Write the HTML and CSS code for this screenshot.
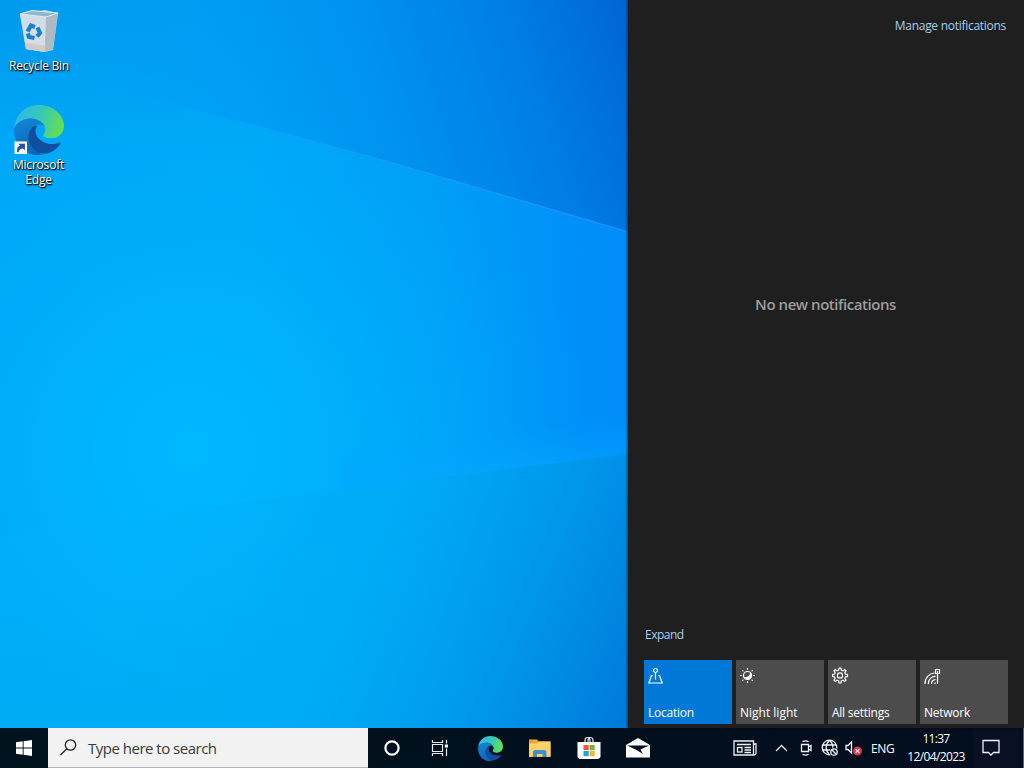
FILE: index.html
```html
<!DOCTYPE html>
<html lang="en">
<head>
    <meta charset="UTF-8">
    <meta name="viewport" content="width=device-width, initial-scale=1.0">
    <title>Desktop</title>
    <link rel="stylesheet" href="styles.css">
</head>
<body>

    <div class="main">
        <!-- Desktop -->
        <div class="desktop">
            <svg class="wallpaper" viewBox="0 0 628 728" preserveAspectRatio="none">
                <defs>
                    <linearGradient id="base" x1="0" y1="0" x2="1" y2="0">
                        <stop offset="0" stop-color="#00a6f7"/>
                        <stop offset="0.4" stop-color="#00a8f8"/>
                        <stop offset="0.7" stop-color="#009df5"/>
                        <stop offset="1" stop-color="#008bfa"/>
                    </linearGradient>
                    <radialGradient id="glow" gradientUnits="userSpaceOnUse" cx="190" cy="450" r="400">
                        <stop offset="0" stop-color="#00b9ff"/>
                        <stop offset="0.4" stop-color="#00b4ff" stop-opacity="0.7"/>
                        <stop offset="1" stop-color="#00acfc" stop-opacity="0"/>
                    </radialGradient>
                    <linearGradient id="upper" gradientUnits="userSpaceOnUse" x1="60" y1="170" x2="640" y2="-10">
                        <stop offset="0" stop-color="#00a2f6" stop-opacity="0"/>
                        <stop offset="0.3" stop-color="#009df5" stop-opacity="0.7"/>
                        <stop offset="0.55" stop-color="#0092ee"/>
                        <stop offset="0.78" stop-color="#007ee6"/>
                        <stop offset="1" stop-color="#0062d2"/>
                    </linearGradient>
                    <linearGradient id="topShade" x1="0" y1="0" x2="0" y2="1">
                        <stop offset="0" stop-color="#0092e8" stop-opacity="0.6"/>
                        <stop offset="1" stop-color="#0092e8" stop-opacity="0"/>
                    </linearGradient>
                    <linearGradient id="lower" gradientUnits="userSpaceOnUse" x1="150" y1="480" x2="640" y2="690">
                        <stop offset="0" stop-color="#00b2f8" stop-opacity="0.2"/>
                        <stop offset="0.45" stop-color="#00abf5" stop-opacity="0.8"/>
                        <stop offset="0.75" stop-color="#0096ea"/>
                        <stop offset="1" stop-color="#007adb"/>
                    </linearGradient>
                    <linearGradient id="floor" x1="0" y1="0" x2="0" y2="1">
                        <stop offset="0" stop-color="#00b4fa" stop-opacity="0"/>
                        <stop offset="1" stop-color="#00acf2" stop-opacity="0.8"/>
                    </linearGradient>
                    <linearGradient id="ray" x1="0" y1="0" x2="1" y2="0">
                        <stop offset="0" stop-color="#28a8ff" stop-opacity="0"/>
                        <stop offset="0.5" stop-color="#28a4ff" stop-opacity="0.6"/>
                        <stop offset="1" stop-color="#1e98ff" stop-opacity="0.8"/>
                    </linearGradient>
                    <linearGradient id="beam" gradientUnits="userSpaceOnUse" x1="500" y1="428" x2="505" y2="471">
                        <stop offset="0" stop-color="#00a4ff" stop-opacity="0"/>
                        <stop offset="1" stop-color="#08a8ff" stop-opacity="0.5"/>
                    </linearGradient>
                </defs>
                <rect width="628" height="728" fill="url(#base)"/>
                <rect width="628" height="728" fill="url(#glow)"/>
                <rect width="628" height="150" fill="url(#topShade)"/>
                <path d="M0 0H628V232L400 165L250 124L100 84L0 60Z" fill="url(#upper)"/>
                <rect y="520" width="628" height="208" fill="url(#floor)"/>
                <path d="M0 535L340 490L628 454V728H0Z" fill="url(#lower)"/>
                <path d="M628 404L340 440V490L628 454Z" fill="url(#beam)"/>
                <path d="M190 108L250 124L400 165L628 232" fill="none" stroke="url(#ray)" stroke-width="1.2"/>
            </svg>
            <div class="shortcut">
                <svg width="48" height="48" viewBox="0 0 48 48">
                    <path d="M5 7L30 3L43 6L38 43L30 45L11 42Z" fill="#c4d3dc"/>
                    <path d="M5 7L31 10L30 45L11 42Z" fill="#d3dde5"/>
                    <path d="M31 10L43 6L38 42L30 45Z" fill="#afbbc4"/>
                    <path d="M5 7L17 3.500L43 6L31 10Z" fill="#8fb9cf" stroke="#dcebf3" stroke-width="1"/>
                    <path d="M10.500 36L30.500 39L30 45L11 42Z" fill="#d2cbc5"/>
                    <g fill="none" stroke="#1980d0" stroke-width="4.200">
                        <path d="M12.500 24.500L16 18.500L20 20"/>
                        <path d="M22.500 20.500L25 26L22 29.500"/>
                        <path d="M19.500 31L14 30L12.800 26.500"/>
                    </g>
                </svg>
                <span class="recycle">Recycle Bin</span>
            </div>
            <div class="shortcut">
                <svg width="50" height="50" viewBox="0 0 48 48">
                    <defs>
                        <linearGradient id="edgeTop" x1="0" y1="0.4" x2="1" y2="0.6">
                            <stop offset="0" stop-color="#2fb8ec"/>
                            <stop offset="0.5" stop-color="#35c9b5"/>
                            <stop offset="1" stop-color="#69e048"/>
                        </linearGradient>
                        <linearGradient id="edgeLeft" x1="0.3" y1="0" x2="0.6" y2="1">
                            <stop offset="0" stop-color="#1583d2"/>
                            <stop offset="1" stop-color="#0b65bb"/>
                        </linearGradient>
                    </defs>
                    <g id="edge">
                        <path d="M0.300 22C1.500 9 11 0 24 0C38 0 48 10 48 20C48 28 42 32 36 32C31 32 28 30.500 28 29C28 28 30 27 30 23.500C30 18 24 13 16 13C9 13 3 16.500 0.300 22Z" fill="url(#edgeTop)"/>
                        <path d="M0.300 22C3 16.500 9 13 16 13C22 13 27 16 29 20C25 17.500 21 19 18.500 22C14 27 15 37 21 43C23 45 26 47 28.500 47.500C12 51-1 39 0.300 22Z" fill="url(#edgeLeft)"/>
                        <path d="M18.500 20.500C12 27 12.500 36 18.500 42C26 49.500 37 48 44.500 37.500C45.200 36.500 44.400 35.700 43.300 36.300C35 39.500 25 36 21.500 29C20 26 20.500 23 22.500 20Z" fill="#104f9f"/>
                    </g>
                    <rect x="0.500" y="35" width="12" height="12" fill="#f8f8fc"/>
                    <path d="M3 45C2.400 41.500 3.800 39.500 5.800 39L4.300 37.300H10.500V43.500L8.700 41.800C6 42 4.700 43.200 4.500 45.500Z" fill="#2e4f9e"/>
                </svg>
                <span class="edge-name">Microsoft<br>Edge</span>
            </div>
        </div>

        <!-- Action center -->
        <div class="action-center">
            <a class="manage">Manage notifications</a>
            <div class="empty">No new notifications</div>
            <a class="expand">Expand</a>
            <div class="tiles">
                <div class="tile active">
                    <svg width="16" height="18" viewBox="0 0 16 18">
                        <circle cx="7.500" cy="3.500" r="2"/>
                        <path d="M7.500 5.500V12.500M5 8.500H3.500L0.800 16H14.200L11.500 8.500H10"/>
                    </svg>
                    <span>Location</span>
                </div>
                <div class="tile">
                    <svg width="16" height="18" viewBox="0 0 16 18">
                        <circle cx="7.500" cy="8.500" r="4"/>
                        <path class="solid" d="M10 5C10.500 8.500 8 10.500 4 10C6 14 12 13 11.800 8C11.600 6.600 11 5.500 10 5Z"/>
                        <path d="M7.500 1V2.700M7.500 14.300V16M0 8.500H1.800M13.200 8.500H15M2.200 3.200L3.400 4.400M11.600 12.600L12.800 13.800M12.800 3.200L11.600 4.400M2.200 13.800L3.400 12.600"/>
                    </svg>
                    <span class="night">Night light</span>
                </div>
                <div class="tile">
                    <svg width="18" height="18" viewBox="0 0 18 18">
                        <path d="M6.700 3L7 1H9L9.300 3L11 3.700L12.700 2.500L14 3.900L12.900 5.600L13.500 7.200L15.500 7.500V9.500L13.500 9.800L12.900 11.400L14 13.100L12.700 14.500L11 13.300L9.300 14L9 16H7L6.700 14L5 13.300L3.300 14.500L2 13.100L3.100 11.400L2.500 9.800L0.500 9.500V7.500L2.500 7.200L3.100 5.600L2 3.900L3.300 2.500L5 3.700Z"/>
                        <circle cx="8" cy="8.500" r="2.600"/>
                    </svg>
                    <span>All settings</span>
                </div>
                <div class="tile">
                    <svg width="18" height="18" viewBox="0 0 18 18">
                        <path d="M11.500 2.500H15.500V6.500H11.500ZM13.500 4V17M1 17C1 10.500 5.500 6.300 10.500 6M4.300 17C4.500 12.500 7.500 9.500 11.500 9.200M7.500 17C7.500 14.500 9 12.800 11.500 12.500M10.500 17L11.500 15.500"/>
                    </svg>
                    <span>Network</span>
                </div>
            </div>
        </div>
    </div>

    <!-- Taskbar -->
    <div class="taskbar">
        <div class="start">
            <svg width="16" height="16" viewBox="0 0 16 16">
                <path d="M0 2.300L6.700 1.300V7.500H0ZM7.600 1.200L16 0V7.500H7.600ZM0 8.500H6.700V14.700L0 13.700ZM7.600 8.500H16V16L7.600 14.800Z" fill="#fff"/>
            </svg>
        </div>
        <div class="search">
            <svg width="17" height="17" viewBox="0 0 17 17" fill="none" stroke="#222" stroke-width="1.300">
                <circle cx="10.500" cy="6" r="5.200"/>
                <path d="M6.800 9.700L0.500 16"/>
            </svg>
            <span>Type here to search</span>
        </div>
        <div class="apps">
            <div class="app">
                <svg width="18" height="18" viewBox="0 0 18 18"><circle cx="9" cy="9" r="6.600" fill="none" stroke="#fff" stroke-width="2.200"/></svg>
            </div>
            <div class="app">
                <svg width="18" height="18" viewBox="0 0 18 18" fill="none" stroke="#e8edf0" stroke-width="1.200">
                    <path d="M1.500 1V3.500H11.500V1M1.500 5.500H11.500V12.500H1.500ZM1.500 17V14.500H11.500V17M15.500 1V4.500M15.500 9.500V17"/>
                    <rect x="13.800" y="5.500" width="3.200" height="3" fill="#fff" stroke="none"/>
                </svg>
            </div>
            <div class="app edge-app">
                <svg width="25" height="25" viewBox="0 0 48 48"><use href="#edge"/></svg>
            </div>
            <div class="app wide">
                <svg width="22" height="20" viewBox="0 0 22 20">
                    <path d="M0 1.500H8L10 3.500H21.500V19H0Z" fill="#e9a93a"/>
                    <path d="M0 5.500H8.500L10.500 3.500H21.500V18.500H0Z" fill="#fbd469"/>
                    <path d="M4 19V13.500L5.500 12H16L17.500 13.500V19H13.500V16H8V19Z" fill="#3f8fca"/>
                </svg>
            </div>
            <div class="app wide">
                <svg width="24" height="24" viewBox="0 0 24 24">
                    <path d="M8 7V4.500C8 0.500 13 0.500 13 4.500V7M11 7V4.500C11 0.500 16 0.500 16 4.500V7" fill="none" stroke="#e2e8ec" stroke-width="1.200"/>
                    <path d="M0.500 6H23.500V21L21.500 23H2.500L0.500 21Z" fill="#fff"/>
                    <path d="M6.500 9H11.700V14.200H6.500Z" fill="#e85a3a"/>
                    <path d="M12.500 9H17.700V14.200H12.500Z" fill="#74b432"/>
                    <path d="M6.500 15H11.700V20.200H6.500Z" fill="#1ca5dc"/>
                    <path d="M12.500 15H17.700V20.200H12.500Z" fill="#f5b82e"/>
                </svg>
            </div>
            <div class="app wide">
                <svg width="24" height="20" viewBox="0 0 24 20">
                    <path d="M0 7L12 0L24 7V19.500H0Z" fill="#fff"/>
                    <path d="M1 7.500H23L14.500 11.500L17 16L10.500 12Z" fill="#02111e"/>
                </svg>
            </div>
        </div>
        <div class="tray">
            <svg class="news" width="24" height="16" viewBox="0 0 24 16">
                <path d="M1 1H20.500V15H1ZM20.500 4H23V13.500Q23 15 21 15H19M4 4.500H18M11.500 7.500H18M11.500 10H18M11.500 12.500H18"/>
                <rect x="4.500" y="7.500" width="4.500" height="4.500"/>
            </svg>
            <svg class="chevron" width="13" height="8" viewBox="0 0 13 8"><path d="M1 7L6.500 1.500L12 7"/></svg>
            <svg class="meet" width="12" height="16" viewBox="0 0 12 16">
                <path d="M1.500 4.500H8.500V11.500H1.500ZM8.500 7L11 5.500V10.500L8.500 9M2.500 1.800Q5.500 0 8.500 1.800M2.500 14.200Q5.500 16 8.500 14.200"/>
            </svg>
            <svg class="globe" width="18" height="18" viewBox="0 0 18 18">
                <circle cx="8.500" cy="8.500" r="7.300"/>
                <path d="M1.700 6H15.300M1.700 11H10M8.500 1.200C4 5.500 4 11.500 8.500 15.800M8.500 1.200C11.500 4 12 7 11.800 9"/>
                <circle cx="13" cy="13" r="4.500" fill="#020f1d" stroke="none"/>
                <circle cx="13" cy="13" r="3.200"/>
                <path d="M10.800 10.800L15.200 15.200"/>
            </svg>
            <svg class="sound" width="18" height="18" viewBox="0 0 18 18">
                <path d="M1 6.500H3L6.500 3V14L3 10.500H1Z"/>
                <circle cx="12.500" cy="12" r="4.500" fill="#dc3545" stroke="none"/>
                <path d="M10.600 10.100L14.400 13.900M14.400 10.100L10.600 13.900"/>
            </svg>
            <span class="lang">ENG</span>
            <div class="clock">
                <span class="time">11:37</span>
                <span>12/04/2023</span>
            </div>
            <div class="notify">
                <svg width="18" height="18" viewBox="0 0 18 18"><path d="M1 1.500H17V13.500H11.500L9 16L6.500 13.500H1Z"/></svg>
            </div>
        </div>
    </div>

    <svg class="cursor" width="12" height="19" viewBox="0 0 12 19">
        <path d="M0.500 0.500V15.500L4 12.300L6.500 18L9 17L6.600 11.500H11.500Z" fill="#fff" stroke="#111" stroke-width="0.700"/>
    </svg>

</body>
</html>
```
FILE: styles.css
```css
* {
    box-sizing: border-box;
}
body {
    margin: 0;
    width: 1024px;
    height: 768px;
    display: flex;
    flex-direction: column;
    overflow: hidden;
    position: relative;
    font-family: "Open Sans", "Noto Sans", sans-serif;
    font-size: 12px;
    color: white;
}
svg {
    display: block;
    flex-shrink: 0;
}
.main {
    display: flex;
    height: 728px;
}

/* Desktop */
.desktop {
    position: relative;
    width: 628px;
    padding-top: 7px;
    overflow: hidden;
}
.wallpaper {
    position: absolute;
    left: 0;
    top: 0;
    width: 100%;
    height: 100%;
}
.shortcut {
    position: relative;
    width: 78px;
    height: 98px;
    display: flex;
    flex-direction: column;
    align-items: center;
    text-align: center;
    line-height: 15px;
    text-shadow: 1px 1px 1px #000, 0 1px 2px #000;
}
.recycle {
    margin-top: 3px;
    letter-spacing: -0.25px;
}
.edge-name {
    margin-top: 2px;
    margin-right: 1px;
    letter-spacing: -0.2px;
}

/* Action center */
.action-center {
    width: 396px;
    display: flex;
    flex-direction: column;
    padding: 18px 16px 4px;
    background: #1f1f1f;
    box-shadow: -1px 0 2px rgba(0, 0, 0, 0.5);
    z-index: 1;
}
.manage {
    align-self: flex-end;
    margin-right: 2px;
    line-height: 16px;
    letter-spacing: -0.28px;
    color: #a6d0ee;
}
.empty {
    margin-top: 260px;
    padding-right: 1px;
    line-height: 20px;
    text-align: center;
    font-size: 15px;
    font-weight: 600;
    letter-spacing: -0.45px;
    color: #9d9d9d;
}
.expand {
    margin-top: auto;
    margin-bottom: 17px;
    padding-left: 1px;
    line-height: 16px;
    letter-spacing: -0.5px;
    color: #a6d0ee;
}
.tiles {
    display: grid;
    grid-template-columns: repeat(4, 88px);
    gap: 4px;
}
.tile {
    height: 64px;
    padding: 7px 4px 3px;
    display: flex;
    flex-direction: column;
    justify-content: space-between;
    background: #4c4c4c;
    line-height: 16px;
    letter-spacing: -0.25px;
}
.tile svg {
    fill: none;
    stroke: white;
    stroke-width: 1.2;
}
.tile .solid {
    fill: white;
    stroke: none;
}
.night {
    letter-spacing: 0;
}
.active {
    background: #0078d7;
}

/* Taskbar */
.taskbar {
    height: 40px;
    display: flex;
    background: linear-gradient(90deg, #00131e, #020f1d 65%, #030e1f);
}
.start {
    width: 48px;
    display: flex;
    align-items: center;
    justify-content: center;
}
.search {
    width: 320px;
    display: flex;
    align-items: center;
    gap: 11px;
    padding-left: 12px;
    background: #f2f2f2;
    border-bottom: 1px solid #b5b5b5;
    color: #3a3a3a;
    font-size: 15px;
    letter-spacing: -0.5px;
}
.apps {
    display: flex;
}
.app {
    width: 48px;
    display: flex;
    align-items: center;
    justify-content: center;
}
.edge-app {
    width: 52px;
    padding-left: 1px;
}
.wide {
    width: 49px;
    padding-right: 2px;
}
.tray {
    margin-left: auto;
    display: flex;
    align-items: center;
}
.tray svg {
    fill: none;
    stroke: #edf3f7;
    stroke-width: 1.3;
}
.news {
    margin-right: 18px;
}
.chevron {
    margin-right: 12px;
}
.meet {
    margin-right: 9px;
}
.globe {
    margin-right: 6px;
}
.sound {
    margin-right: 8px;
}
.lang {
    width: 25px;
    letter-spacing: -0.4px;
}
.clock {
    width: 77px;
    padding-left: 3px;
    display: flex;
    flex-direction: column;
    align-items: center;
    line-height: 18px;
    letter-spacing: -0.6px;
}
.time {
    letter-spacing: -0.7px;
}
.notify {
    width: 51px;
    height: 40px;
    padding-left: 9px;
    margin-left: 0;
    display: flex;
    align-items: center;
    background: #0a1024;
    border-right: 1px solid #5a6472;
    box-shadow: inset -4px 0 #030e1f;
}

.cursor {
    position: absolute;
    left: 934px;
    top: 636px;
}
```
